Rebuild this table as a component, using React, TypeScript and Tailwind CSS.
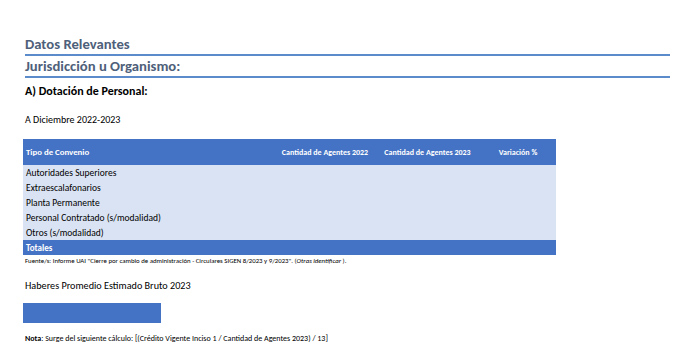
const rows = [
  "Autoridades Superiores",
  "Extraescalafonarios",
  "Planta Permanente",
  "Personal Contratado (s/modalidad)",
  "Otros (s/modalidad)",
];

const cols = "grid grid-cols-[252px_100px_105px_76px]";

const App = () => {
  return (
    <div
      className="w-[700px] h-[350px] bg-white text-black pl-[25px] pt-[36px] overflow-hidden"
      style={{ fontFamily: '"Carlito", "Lato", sans-serif' }}
    >
      {/* Section titles */}
      <div className="w-[645px] border-b-2 border-[#5b8bcb] text-[14.7px] font-bold text-[#4e607a] leading-[17px] pb-[1px]">
        Datos Relevantes
      </div>
      <div className="w-[645px] border-b-2 border-[#5b8bcb] text-[14.7px] font-bold text-[#4e607a] leading-[17px] pt-[2px] pb-[1px]">
        Jurisdicción u Organismo:
      </div>

      <h2 className="mt-[6px] text-[12px] font-bold leading-[15px]">A) Dotación de Personal:</h2>
      <p className="mt-[15px] text-[10px] leading-[12px]">A Diciembre 2022-2023</p>

      {/* Dotación table */}
      <div className="mt-[13px] -ml-[2px] w-[533px] text-[8px] leading-[10px]">
        <div className={`${cols} h-[26px] items-center bg-[#4472c4] text-white font-bold`}>
          <div className="pl-[3px] text-[8.8px]">Tipo de Convenio</div>
          <div className="text-center">Cantidad de Agentes 2022</div>
          <div className="text-center">Cantidad de Agentes 2023</div>
          <div className="text-center">Variación %</div>
        </div>
        <div className="bg-[#dae3f3] text-[9.5px]">
          {rows.map((r) => (
            <div key={r} className={`${cols} h-[15px] items-center`}>
              <div className="pl-[3px]">{r}</div>
              <div />
              <div />
              <div />
            </div>
          ))}
        </div>
        <div className={`${cols} h-[15px] items-center bg-[#4472c4] text-white font-bold text-[9px]`}>
          <div className="pl-[3px]">Totales</div>
          <div />
          <div />
          <div />
        </div>
      </div>
      <p className="mt-[2px] text-[6.8px] leading-[8px]">
        Fuente/s: Informe UAI "Cierre por cambio de administración - Circulares SIGEN 8/2023 y 9/2023". (
        <i>Otras identificar</i> ).
      </p>

      <p className="mt-[15px] text-[10.2px] leading-[12px]">Haberes Promedio Estimado Bruto 2023</p>
      <div className="mt-[11px] -ml-[2px] w-[138px] h-[20px] bg-[#4472c4]" />

      <p className="mt-[11px] text-[8px] leading-[9px]">
        <b>Nota</b>: Surge del siguiente cálculo: [(Crédito Vigente Inciso 1 / Cantidad de Agentes 2023) / 13]
      </p>
    </div>
  );
};

export default App;
